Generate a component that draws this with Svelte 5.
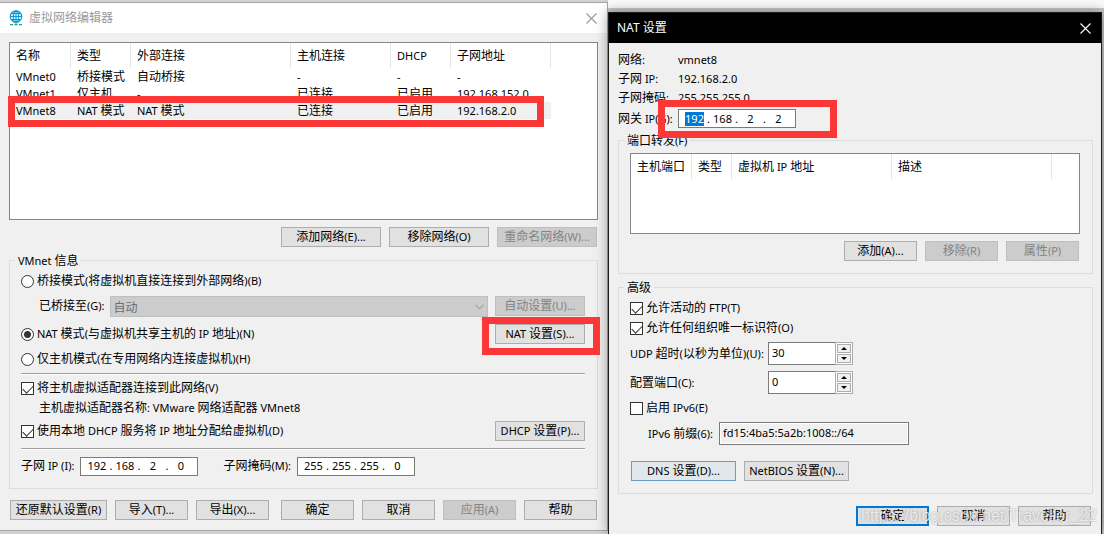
<script lang="ts">
  const networks = [
    { name: 'VMnet0', type: '桥接模式', external: '自动桥接', host: '-', dhcp: '-', subnet: '-' },
    { name: 'VMnet1', type: '仅主机', external: '-', host: '已连接', dhcp: '已启用', subnet: '192.168.152.0' },
    { name: 'VMnet8', type: 'NAT 模式', external: 'NAT 模式', host: '已连接', dhcp: '已启用', subnet: '192.168.2.0' }
  ];

  let selected = $state('VMnet8');
  let mode = $state('nat');
  let connectHost = $state(true);
  let useDhcp = $state(true);
  let activeFtp = $state(true);
  let anyOui = $state(true);
  let ipv6 = $state(false);
  let udpTimeout = $state(30);
  let configPort = $state(0);

  // Chinese runs are set one size larger than the latin text around them
  function runs(text: string) {
    return text.split(/([\u4e00-\u9fff]+)/).filter(Boolean);
  }

  const isHan = (s: string) => /[\u4e00-\u9fff]/.test(s);
</script>

{#snippet t(text: string)}<span class="t">{#each runs(text) as run}{#if isHan(run)}<span class="han">{run}</span>{:else}{run}{/if}{/each}</span>{/snippet}

{#snippet ip(label: string, octets: string[], active: boolean)}
  <span class="ip" role="group" aria-label={label}>
    {#each octets as octet, i}
      {#if i > 0}<span class="dot">.</span>{/if}
      <input class:active={active && i === 0} value={octet} maxlength="3" aria-label={`${label} ${i + 1}`} />
    {/each}
  </span>
{/snippet}

{#snippet cross()}
  <svg width="11" height="11" viewBox="0 0 11 11" aria-hidden="true">
    <path d="M.5 .5 10.5 10.5M10.5 .5 .5 10.5" fill="none" stroke="currentColor" stroke-width="1.1" />
  </svg>
{/snippet}

<div class="desktop">
  <main class="window editor">
    <header class="title">
      <svg class="globe" width="14" height="16" viewBox="0 0 14 16" aria-hidden="true">
        <g fill="none" stroke="#0c9ad3" stroke-width="1.2">
          <circle cx="7" cy="6.5" r="5.7" />
          <ellipse cx="7" cy="6.5" rx="2.7" ry="5.7" />
          <path d="M7 .8v11.4M1.3 6.5h11.4M2.2 3.5h9.6M2.2 9.5h9.6" />
        </g>
        <path d="M1 14.7h3M5.5 14.7h3M10 14.7h3" stroke="#1ba08c" stroke-width="1.2" />
        <path d="M7 12v2" stroke="#0c9ad3" />
      </svg>
      <h1>{@render t('虚拟网络编辑器')}</h1>
      <button class="close" aria-label="Close">{@render cross()}</button>
    </header>

    <div class="body">
      <div class="list networks">
        <table>
          <colgroup>
            <col class="w61" /><col class="w60" /><col class="w160" /><col class="w100" /><col class="w60" /><col class="w100" />
          </colgroup>
          <thead>
            <tr>
              {#each ['名称', '类型', '外部连接', '主机连接', 'DHCP', '子网地址'] as head}
                <th>{@render t(head)}</th>
              {/each}
            </tr>
          </thead>
          <tbody>
            {#each networks as net}
              <tr class:selected={selected === net.name} onclick={() => (selected = net.name)}>
                <td>{net.name}</td>
                <td>{@render t(net.type)}</td>
                <td>{@render t(net.external)}</td>
                <td>{@render t(net.host)}</td>
                <td>{@render t(net.dhcp)}</td>
                <td>{net.subnet}</td>
              </tr>
            {/each}
          </tbody>
        </table>
      </div>

      <div class="buttons wide">
        <button>{@render t('添加网络(E)...')}</button>
        <button>{@render t('移除网络(O)')}</button>
        <button disabled>{@render t('重命名网络(W)...')}</button>
      </div>

      <fieldset class="info">
        <legend>{@render t('VMnet 信息')}</legend>
        <label class="row gap5">
          <input type="radio" bind:group={mode} value="bridged" />
          {@render t('桥接模式(将虚拟机直接连接到外部网络)(B)')}
        </label>
        <div class="row gap8 indent">
          <label for="bridge">{@render t('已桥接至(G):')}</label>
          <span class="select">
            <select id="bridge" disabled><option>自动</option></select>
            <svg width="9" height="6" viewBox="0 0 9 6" aria-hidden="true">
              <path d="M.5 .8 4.5 4.8 8.5 .8" fill="none" stroke="#8c8c8c" />
            </svg>
          </span>
          <button class="side" disabled>{@render t('自动设置(U)...')}</button>
        </div>
        <div class="row gap5">
          <label class="check">
            <input type="radio" bind:group={mode} value="nat" />
            {@render t('NAT 模式(与虚拟机共享主机的 IP 地址)(N)')}
          </label>
          <span class="push mark nat-mark"><button class="side">{@render t('NAT 设置(S)...')}</button></span>
        </div>
        <label class="row">
          <input type="radio" bind:group={mode} value="host" />
          {@render t('仅主机模式(在专用网络内连接虚拟机)(H)')}
        </label>
        <hr class="upper" />
        <label class="row">
          <input type="checkbox" bind:checked={connectHost} />
          {@render t('将主机虚拟适配器连接到此网络(V)')}
        </label>
        <p class="row gap3 indent">{@render t('主机虚拟适配器名称: VMware 网络适配器 VMnet8')}</p>
        <div class="row">
          <label class="check">
            <input type="checkbox" bind:checked={useDhcp} />
            {@render t('使用本地 DHCP 服务将 IP 地址分配给虚拟机(D)')}
          </label>
          <button class="side push">{@render t('DHCP 设置(P)...')}</button>
        </div>
        <hr class="lower" />
        <div class="row addresses">
          <span class="pair">{@render t('子网 IP (I):')}{@render ip('子网 IP', ['192', '168', '2', '0'], false)}</span>
          <span class="pair">{@render t('子网掩码(M):')}{@render ip('子网掩码', ['255', '255', '255', '0'], false)}</span>
        </div>
      </fieldset>

      <footer class="buttons bottom">
        <button class="restore">{@render t('还原默认设置(R)')}</button>
        <button>{@render t('导入(T)...')}</button>
        <button>{@render t('导出(X)...')}</button>
        <span class="push"></span>
        <button>{@render t('确定')}</button>
        <button>{@render t('取消')}</button>
        <button disabled>{@render t('应用(A)')}</button>
        <button>{@render t('帮助')}</button>
      </footer>
    </div>
  </main>

  <div class="backdrop">
    <section class="window dialog">
      <header class="title">
        <h2>{@render t('NAT 设置')}</h2>
        <button class="close" aria-label="Close">{@render cross()}</button>
      </header>

      <div class="body">
        <dl>
          <dt>{@render t('网络:')}</dt>
          <dd>vmnet8</dd>
          <dt>{@render t('子网 IP:')}</dt>
          <dd>192.168.2.0</dd>
          <dt>{@render t('子网掩码:')}</dt>
          <dd>255.255.255.0</dd>
          <dt class="gateway">{@render t('网关 IP(G):')}</dt>
          <dd class="gateway"><span class="mark ip-mark">{@render ip('网关 IP', ['192', '168', '2', '2'], true)}</span></dd>
        </dl>

        <fieldset class="ports">
          <legend>{@render t('端口转发(F)')}</legend>
          <div class="list">
            <table>
              <colgroup>
                <col class="w61" /><col class="w40" /><col class="w160" /><col class="w160" />
              </colgroup>
              <thead>
                <tr>
                  {#each ['主机端口', '类型', '虚拟机 IP 地址', '描述'] as head}
                    <th>{@render t(head)}</th>
                  {/each}
                </tr>
              </thead>
            </table>
          </div>
          <div class="buttons">
            <button>{@render t('添加(A)...')}</button>
            <button disabled>{@render t('移除(R)')}</button>
            <button disabled>{@render t('属性(P)')}</button>
          </div>
        </fieldset>

        <fieldset class="advanced">
          <legend>{@render t('高级')}</legend>
          <label class="row">
            <input type="checkbox" bind:checked={activeFtp} />
            {@render t('允许活动的 FTP(T)')}
          </label>
          <label class="row">
            <input type="checkbox" bind:checked={anyOui} />
            {@render t('允许任何组织唯一标识符(O)')}
          </label>
          <div class="field">
            <label for="udp">{@render t('UDP 超时(以秒为单位)(U):')}</label>
            <span class="spin">
              <input id="udp" type="number" bind:value={udpTimeout} />
              <span class="arrows">
                <button class="up" aria-label="Increase" onclick={() => udpTimeout++}></button>
                <button class="down" aria-label="Decrease" onclick={() => udpTimeout--}></button>
              </span>
            </span>
          </div>
          <div class="field last">
            <label for="port">{@render t('配置端口(C):')}</label>
            <span class="spin">
              <input id="port" type="number" bind:value={configPort} />
              <span class="arrows">
                <button class="up" aria-label="Increase" onclick={() => configPort++}></button>
                <button class="down" aria-label="Decrease" onclick={() => configPort--}></button>
              </span>
            </span>
          </div>
          <label class="row">
            <input type="checkbox" bind:checked={ipv6} />
            {@render t('启用 IPv6(E)')}
          </label>
          <div class="prefix">
            <label for="prefix">{@render t('IPv6 前缀(6):')}</label>
            <input id="prefix" value="fd15:4ba5:5a2b:1008::/64" readonly />
          </div>
          <div class="buttons extra">
            <button class="hot">{@render t('DNS 设置(D)...')}</button>
            <button>{@render t('NetBIOS 设置(N)...')}</button>
          </div>
        </fieldset>

        <footer class="buttons bottom">
          <button class="default">{@render t('确定')}</button>
          <button>{@render t('取消')}</button>
          <button>{@render t('帮助')}</button>
          <span class="watermark">https://blog.csdn.net/Traveller_22</span>
        </footer>
      </div>
    </section>
  </div>
</div>

<style>
  :global(body) {
    background: #d2d2d2;
  }

  .desktop {
    display: grid;
    grid-template-columns: 608fr 496fr;
    align-items: start;
    min-height: 100vh;
    overflow: hidden;
    font: 11px/16px "Noto Sans", "Noto Sans CJK SC", sans-serif;
    color: #000;
  }

  .desktop * {
    box-sizing: border-box;
  }

  .han {
    font-family: "Noto Sans CJK SC", sans-serif;
    font-size: 12px;
    line-height: 1;
  }

  .t {
    white-space: nowrap;
  }

  .window {
    background: #f0f0f0;
  }

  .editor {
    margin-top: 2px;
    border: 1px solid #a5a5a5;
    border-left: 0;
  }

  .backdrop {
    display: flex;
    flex-direction: column;
    min-height: 100vh;
    padding: 12px 2px 0 0;
    background: linear-gradient(#fafafa 8px, #c8c8c8 8px);
  }

  .dialog {
    position: relative;
    flex: 1;
    border: 1px solid #1c1c1c;
    border-bottom: 0;
    box-shadow: 0 0 12px rgba(0, 0, 0, 0.4);
  }

  .title {
    display: flex;
    align-items: center;
    height: 30px;
    padding: 0 10px 0 9px;
    background: #fff;
    color: #999;
  }

  .dialog .title {
    padding-left: 8px;
    background: #000;
    color: #fff;
  }

  .globe {
    margin-right: 6px;
  }

  h1,
  h2 {
    margin: 0;
    font-size: 12px;
    font-weight: normal;
  }

  .close {
    width: 11px;
    height: 11px;
    margin-left: auto;
    padding: 0;
    border: 0;
    background: none;
    color: inherit;
  }

  .close svg {
    display: block;
  }

  .body {
    padding: 9px 9px 10px;
  }

  .dialog .body {
    padding: 7px 8px 8px;
  }

  .list {
    border: 1px solid #828790;
    background: #fff;
  }

  .networks {
    height: 178px;
  }

  table {
    table-layout: fixed;
    border-spacing: 0;
    width: 0;
  }

  .w40 {
    width: 40px;
  }

  .w60 {
    width: 60px;
  }

  .w61 {
    width: 61px;
  }

  .w100 {
    width: 100px;
  }

  .w160 {
    width: 160px;
  }

  th {
    height: 25px;
    padding: 0 0 0 6px;
    border-right: 1px solid #e5e5e5;
    font-weight: normal;
    text-align: left;
  }

  td {
    height: 17px;
    padding: 0 0 0 6px;
    line-height: 16px;
    white-space: nowrap;
  }

  .selected {
    position: relative;
    background: #f0f0f0;
  }

  .selected::after,
  .mark::after {
    content: '';
    position: absolute;
    z-index: 1;
    border: 7px solid #fc3837;
    pointer-events: none;
  }

  .selected::after {
    inset: -6px 7px -8px -2px;
  }

  .mark {
    position: relative;
    display: flex;
  }

  .nat-mark::after {
    inset: -7px -15px -11px -13px;
  }

  .ip-mark {
    width: 118px;
  }

  .ip-mark::after {
    inset: -9px -41px -10px -20px;
  }

  button {
    font: inherit;
    color: #000;
  }

  .buttons {
    position: relative;
    display: flex;
    justify-content: flex-end;
    gap: 8px;
    margin-top: 7px;
    padding-right: 1px;
  }

  .buttons button,
  .side {
    flex: none;
    width: 73px;
    height: 20px;
    padding: 0;
    border: 1px solid #adadad;
    background: #e1e1e1;
    line-height: 16px;
  }

  .wide button {
    width: 100px;
  }

  .buttons button:disabled,
  .side:disabled {
    border-color: #bfbfbf;
    background: #ccc;
    color: #838383;
  }

  .buttons .restore {
    width: 97px;
  }

  .bottom {
    margin-top: 12px;
    padding-left: 1px;
  }

  .dialog .bottom {
    padding-right: 2px;
  }

  .editor .bottom {
    margin-top: 11px;
  }

  .editor .bottom .push {
    margin-right: -4px;
  }

  .buttons .default {
    border: 2px solid #0078d7;
  }

  .side {
    width: 90px;
  }

  .push {
    margin-left: auto;
  }

  fieldset {
    min-width: 0;
    margin: 6px 0 0;
    padding: 3px 12px 12px 11px;
    border: 1px solid #dcdcdc;
  }

  legend {
    height: 15px;
    margin-left: -6px;
    padding: 0 3px;
    line-height: 15px;
  }

  .row {
    display: flex;
    align-items: center;
    height: 20px;
    margin: 0;
  }

  .check {
    display: flex;
    align-items: center;
  }

  .gap3 {
    margin-bottom: 3px;
  }

  .gap5 {
    margin-bottom: 5px;
  }

  .gap8 {
    margin-bottom: 8px;
  }

  .indent {
    padding-left: 18px;
  }

  input[type='radio'],
  input[type='checkbox'] {
    appearance: none;
    flex: none;
    width: 13px;
    height: 13px;
    margin: 0 3px 0 0;
    border: 1px solid #333;
    background: #fff;
  }

  input[type='radio'] {
    border-radius: 50%;
  }

  input[type='radio']:checked {
    background: radial-gradient(circle, #333 3px, #fff 4px);
  }

  input[type='checkbox']:checked::before {
    content: '';
    display: block;
    width: 9px;
    height: 5px;
    margin: 2px 0 0 1px;
    border: solid #333;
    border-width: 0 0 1px 1px;
    transform: rotate(-45deg);
  }

  .select {
    position: relative;
    flex: 1;
    margin: 0 7px 0 5px;
  }

  select {
    display: block;
    appearance: none;
    width: 100%;
    height: 21px;
    padding: 0 3px;
    border: 1px solid #bfbfbf;
    border-radius: 0;
    background: #ccc;
    color: #6d6d6d;
    font: 12px "Noto Sans CJK SC", sans-serif;
    opacity: 1;
  }

  .select svg {
    position: absolute;
    top: 8px;
    right: 4px;
  }

  hr {
    height: 2px;
    border: solid;
    border-width: 1px 0;
    border-color: #a0a0a0 #fff #fff;
  }

  .upper {
    margin: 4px 0 3px;
  }

  .lower {
    margin: 7px 0 6px;
  }

  .addresses {
    gap: 25px;
  }

  .pair {
    display: flex;
    align-items: center;
    gap: 6px;
  }

  .ip {
    display: flex;
    align-items: center;
    width: 118px;
    height: 19px;
    padding-left: 3px;
    border: 1px solid #7a7a7a;
    background: #fff;
  }

  .ip input {
    width: 19px;
    height: 14px;
    margin: 0 3px;
    padding: 0;
    border: 0;
    background: none;
    font: inherit;
    line-height: 14px;
    text-align: center;
  }

  .ip .active {
    background: #0078d7;
    color: #fff;
  }

  .dot {
    width: 3px;
  }

  dl {
    display: grid;
    grid-template-columns: 60px 1fr;
    grid-auto-rows: 19px;
    align-items: center;
    margin: 0;
    padding-left: 1px;
  }

  dd {
    margin: 0;
  }

  .gateway {
    margin-top: 4px;
  }

  .ports {
    margin-top: 7px;
  }

  .ports .list {
    height: 81px;
    margin-top: 2px;
  }

  .dialog fieldset {
    margin-left: 1px;
  }

  .field {
    display: flex;
    align-items: center;
    height: 23px;
    margin-bottom: 6px;
  }

  .row + .field {
    margin-top: 4px;
  }

  .field label {
    width: 138px;
  }

  .last {
    margin-bottom: 4px;
  }

  .spin {
    display: flex;
    width: 85px;
    height: 23px;
  }

  .spin input,
  .prefix input {
    min-width: 0;
    height: 23px;
    padding: 0 3px 3px;
    border: 1px solid #7a7a7a;
    background: #fff;
    font: inherit;
  }

  .spin input {
    appearance: textfield;
    flex: 1;
    border-right: 0;
  }

  .arrows {
    display: flex;
    flex-direction: column;
    gap: 1px;
    width: 18px;
    padding: 1px;
    border: 1px solid #adadad;
    background: #fff;
  }

  .arrows button {
    display: flex;
    flex: 1;
    align-items: center;
    justify-content: center;
    padding: 0;
    border: 1px solid #adadad;
    background: #f0f0f0;
  }

  .arrows button::before {
    content: '';
    border: 3px solid transparent;
  }

  .arrows .up::before {
    border-top: 0;
    border-bottom-color: #000;
  }

  .arrows .down::before {
    border-bottom: 0;
    border-top-color: #000;
  }

  .prefix {
    display: flex;
    align-items: center;
    gap: 6px;
    margin-top: 4px;
    padding-left: 18px;
  }

  .prefix input {
    width: 190px;
    background: #f0f0f0;
    box-shadow: inset 0 0 0 1px #fff;
  }

  .extra {
    justify-content: flex-start;
    margin-top: 16px;
    padding-left: 1px;
  }

  .extra button {
    width: 105px;
  }

  .buttons .hot {
    border-color: #6a9bc6;
    background: #e1e8ec;
  }

  .watermark {
    position: absolute;
    right: -4px;
    color: rgba(255, 255, 255, 0.75);
    font: 16px/20px "Liberation Sans", sans-serif;
    text-shadow: 0 0 2px rgba(0, 0, 0, 0.35);
    pointer-events: none;
  }
</style>
